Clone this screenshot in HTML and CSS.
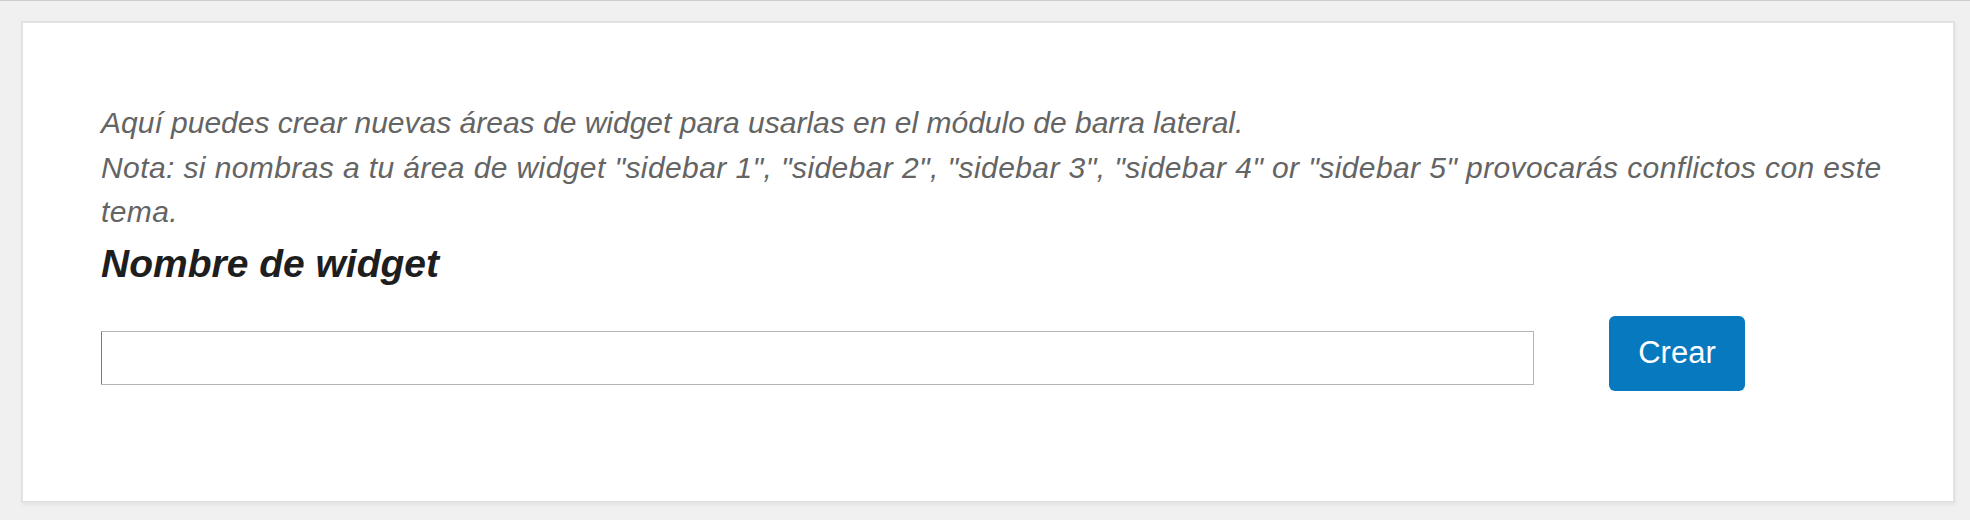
FILE: index.html
```html
<!DOCTYPE html>
<html lang="es">
<head>
<meta charset="utf-8">
<title>Áreas de widget</title>
<link rel="stylesheet" href="styles.css">
</head>
<body>
<div class="card">
  <p class="intro">Aquí puedes crear nuevas áreas de widget para usarlas en el módulo de barra lateral.<br><span class="note">Nota: si nombras a tu área de widget "sidebar 1", "sidebar 2", "sidebar 3", "sidebar 4" or "sidebar 5" provocarás conflictos con este tema.</span></p>
  <h2 class="title">Nombre de widget</h2>
  <form class="row" onsubmit="return false">
    <input class="field" type="text" aria-label="Nombre de widget">
    <button class="btn" type="submit">Crear</button>
  </form>
</div>
</body>
</html>
```
FILE: styles.css
```css
html, body {
  margin: 0;
  padding: 0;
}
body {
  background: #f0f0f0;
  border-top: 1px solid #cdcdcd;
  font-family: "Liberation Sans", Arial, sans-serif;
  height: 519px;
  overflow: hidden;
}
.card {
  margin: 20px 15px 0 21px;
  background: #fff;
  border: 2px solid #e2e2e2;
  box-shadow: 1px 2px 3px rgba(0, 0, 0, 0.05);
  padding: 78px 60px 110px 78px;
}
.intro {
  margin: 0;
  font-family: "Liberation Sans", Arial, sans-serif;
  font-size: 30px;
  line-height: 44.5px;
  font-style: italic;
  color: #646464;
}
.note {
  letter-spacing: 0.4px;
}
.title {
  margin: 7px 0 0;
  font-family: "Liberation Sans", Arial, sans-serif;
  font-size: 39px;
  line-height: 44px;
  font-style: italic;
  font-weight: bold;
  color: #1e1e1e;
}
.row {
  display: flex;
  align-items: flex-start;
  gap: 75px;
  margin-top: 30px;
}
.field {
  box-sizing: border-box;
  width: 1433px;
  height: 54px;
  margin-top: 15px;
  border: 1px solid #b4b4b4;
  border-left-color: #7a7a7a;
  border-radius: 1px;
  background: #fff;
  padding: 0 10px;
  font-size: 24px;
  font-family: "Liberation Sans", Arial, sans-serif;
}
.btn {
  box-sizing: border-box;
  width: 136px;
  height: 75px;
  border: none;
  border-radius: 6px;
  background: #0779bf;
  color: #fff;
  font-family: "Liberation Sans", Arial, sans-serif;
  font-size: 31px;
  padding: 0;
  cursor: pointer;
}
```
